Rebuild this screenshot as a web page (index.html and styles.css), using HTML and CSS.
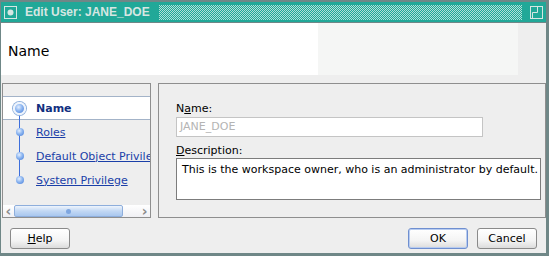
FILE: index.html
```html
<!DOCTYPE html>
<html lang="en">
  <head>
    <meta charset="UTF-8" />
    <title>Edit User: JANE_DOE</title>
    <link rel="stylesheet" href="styles.css">
  </head>
  <body>
    <div class="window">
      <div class="titlebar">
        <svg class="menu-icon" width="13" height="13" viewBox="0 0 13 13">
          <rect x="0.5" y="0.5" width="12" height="12" fill="none" stroke="#d6e6e2" />
          <circle cx="6.5" cy="6.5" r="3" fill="#d6e6e2" />
        </svg>
        <span class="title">Edit User: JANE_DOE</span>
        <div class="grip"></div>
        <svg class="max-icon" width="14" height="13" viewBox="0 0 14 13">
          <rect x="0.5" y="0.5" width="12" height="12" fill="none" stroke="#d6e6e2" />
          <path d="M7.5 0.5 V6.5 H2.5 V12.5" fill="none" stroke="#d6e6e2" />
        </svg>
      </div>

      <div class="header">
        <h1>Name</h1>
      </div>

      <div class="content">
        <div class="steps">
          <ul class="step-list">
            <li class="step selected">
              <span class="node first"><i class="dot big"></i></span>
              <span class="step-label">Name</span>
            </li>
            <li class="step">
              <span class="node"><i class="dot"></i></span>
              <a href="#">Roles</a>
            </li>
            <li class="step">
              <span class="node"><i class="dot"></i></span>
              <a href="#">Default Object Privileges</a>
            </li>
            <li class="step">
              <span class="node last"><i class="dot"></i></span>
              <a href="#">System Privilege</a>
            </li>
          </ul>
          <div class="hscroll">
            <span class="arrow">&#8249;</span>
            <div class="thumb"><i></i></div>
            <span class="arrow">&#8250;</span>
          </div>
        </div>

        <div class="form-panel">
          <label class="field-label">N<u>a</u>me:</label>
          <div class="input disabled">JANE_DOE</div>
          <label class="field-label"><u>D</u>escription:</label>
          <div class="textarea">
            This is the workspace owner, who is an administrator by default.
          </div>
        </div>
      </div>

      <div class="footer">
        <button><u>H</u>elp</button>
        <div class="right-buttons">
          <button class="default">OK</button>
          <button>Cancel</button>
        </div>
      </div>
    </div>
  </body>
</html>
```

FILE: styles.css
```css
html,
body {
  margin: 0;
  padding: 0;
  overflow: hidden;
  font-family: "DejaVu Sans", sans-serif;
  font-size: 11px;
  background: #eeeeee;
}

.window {
  box-sizing: border-box;
  width: 549px;
  height: 256px;
  display: flex;
  flex-direction: column;
  border-top: 2px solid #6f8787;
  border-left: 1px solid #6f8787;
  border-right: 3px solid #6f8787;
  border-bottom: 3px solid #6f8787;
  background: #eeeeee;
}

/* title bar */
.titlebar {
  height: 20px;
  display: flex;
  align-items: center;
  background: #21a898;
  border-bottom: 1px solid #6f8787;
  padding: 0 2px 0 3px;
}

.menu-icon {
  display: block;
}

.title {
  margin-left: 8px;
  font-family: "Liberation Sans", sans-serif;
  font-weight: bold;
  font-size: 12px;
  color: #d6e6e2;
  white-space: nowrap;
}

.grip {
  flex: 1;
  height: 15px;
  margin: 0 8px 0 9px;
  background: repeating-conic-gradient(#21a898 0 25%, #b3e0d8 0 50%) 0 0 / 2px 2px;
}

.max-icon {
  display: block;
}

/* header */
.header {
  height: 52px;
  background: linear-gradient(to right, #ffffff 0 317px, #f5f6f5 317px 517px, #eeeeee 517px);
  display: flex;
  align-items: center;
}

.header h1 {
  margin: 3px 0 0 7px;
  font-size: 14px;
  font-weight: normal;
  color: #000;
}

/* content */
.content {
  height: 135px;
  display: flex;
  gap: 7px;
  padding: 8px 0 0 1px;
}

.steps {
  box-sizing: border-box;
  flex: none;
  width: 149px;
  border: 1px solid #8e8e8e;
  display: flex;
  flex-direction: column;
  overflow: hidden;
}

.step-list {
  flex: 1;
  list-style: none;
  margin: 12px 0 0 0;
  padding: 0;
}

.step {
  height: 24px;
  display: flex;
  align-items: center;
  white-space: nowrap;
}

.step.selected {
  box-sizing: border-box;
  background: #ffffff;
  border-top: 1px solid #a3b3c8;
  border-bottom: 1px solid #a3b3c8;
}

.node {
  flex: none;
  width: 33px;
  height: 100%;
  display: flex;
  align-items: center;
  justify-content: center;
  background: linear-gradient(#3d6fdc, #3d6fdc) center / 1px 100% no-repeat;
}

.step.selected .node {
  background-size: 1px 50%;
  background-position: center bottom;
  height: calc(100% + 2px);
}

.node.last {
  background-size: 1px 50%;
  background-position: center top;
}

.dot {
  display: block;
  width: 8px;
  height: 8px;
  border-radius: 50%;
  background: radial-gradient(circle at 40% 35%, #e4efff 0, #8db6f0 45%, #3f78d8 100%);
}

.dot.big {
  width: 9px;
  height: 9px;
  border: 2px solid #eef4fc;
  box-shadow: 0 0 0 1px #8fb0dc;
}

.step-label {
  font-weight: bold;
  color: #12307f;
}

.step a {
  color: #1a3fa8;
  text-decoration: underline;
}

.hscroll {
  height: 12px;
  display: flex;
  align-items: center;
  background: linear-gradient(#ffffff, #f0f0f4);
}

.hscroll .arrow {
  width: 11px;
  text-align: center;
  color: #8c8c8c;
  font-size: 14px;
  line-height: 12px;
  font-weight: bold;
}

.thumb {
  box-sizing: border-box;
  width: 112px;
  height: 12px;
  border: 1px solid #8eaedc;
  border-radius: 2px;
  background: linear-gradient(#eef4fc, #c2d8f4 50%, #a9c7ef);
  display: flex;
  justify-content: center;
  align-items: center;
  margin-right: 16px;
}

.thumb i {
  width: 5px;
  height: 5px;
  border-radius: 50%;
  background: #7ea6e0;
}

.form-panel {
  box-sizing: border-box;
  flex: 1;
  min-width: 0;
  border: 1px solid #8e8e8e;
  padding: 18px 4px 0 17px;
}

.field-label {
  display: block;
  height: 13px;
  line-height: 13px;
  color: #000;
}

.input {
  box-sizing: border-box;
  width: 307px;
  height: 20px;
  margin: 2px 0 7px 0;
  border: 1px solid #c4c4c4;
  background: #ffffff;
  color: #b4b4b4;
  padding: 0 3px;
  line-height: 18px;
}

.textarea {
  box-sizing: border-box;
  height: 42px;
  margin-top: 1px;
  border: 1px solid #7c7c7c;
  background: #ffffff;
  padding: 4px 5px;
  color: #000;
  white-space: nowrap;
  overflow: hidden;
}

/* footer */
.footer {
  display: flex;
  justify-content: space-between;
  padding: 10px 9px 0 9px;
}

.right-buttons {
  display: flex;
  gap: 9px;
}

.footer button {
  box-sizing: border-box;
  width: 60px;
  height: 21px;
  padding: 0;
  border: 1px solid #8a8a8a;
  border-radius: 3px;
  background: linear-gradient(#ffffff, #f4f4f4 60%, #dcdcdc);
  font-family: inherit;
  font-size: 11px;
  color: #000;
}

.footer button.default {
  border-color: #6f8fd0;
  box-shadow: inset 0 0 0 1px #b8ccf0;
}
```
